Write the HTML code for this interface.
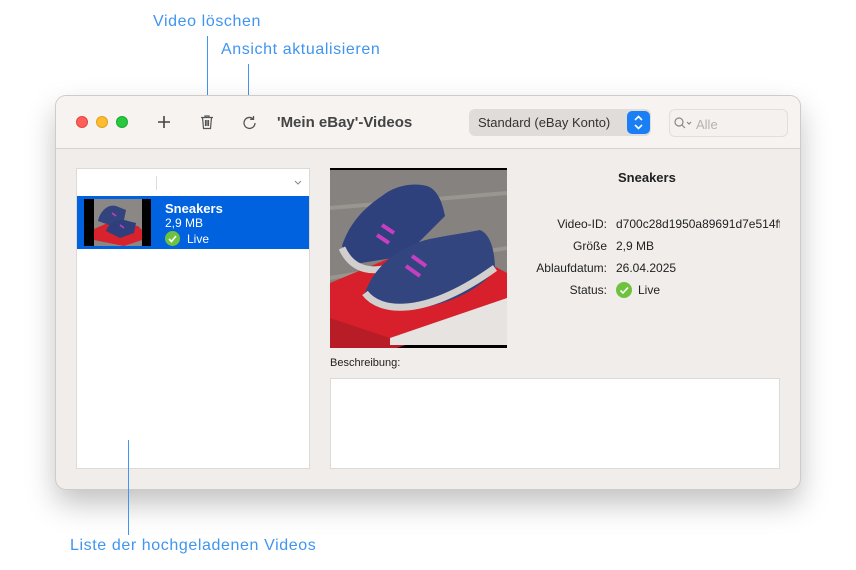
<!DOCTYPE html>
<html><head><meta charset="utf-8"><style>
*{margin:0;padding:0;box-sizing:border-box}
body{width:856px;height:570px;background:#fff;position:relative;overflow:hidden;font-family:"Liberation Sans",sans-serif;color:#222}
.a{position:absolute;color:#3f95f0;font-size:16px;white-space:nowrap;letter-spacing:.6px}
.ln{position:absolute;width:1px;background:#3f95f0}
.win{position:absolute;left:56px;top:96px;width:744px;height:393px;border-radius:10px;background:#f0edeb;box-shadow:0 0 0 1px #cfcbc8,0 14px 30px rgba(0,0,0,.25);overflow:hidden}
.tb{position:absolute;left:0;top:0;width:100%;height:53px;background:#f6f3f1;border-bottom:1px solid #d6d2cf}
.dot{position:absolute;top:20px;width:12px;height:12px;border-radius:50%}
.t{position:absolute;font-size:13px;white-space:nowrap}
.r{text-align:right;width:100px}
</style></head><body>
<div class="a" style="left:153px;top:13px">Video löschen</div>
<div class="ln" style="left:207px;top:36px;height:64px"></div>
<div class="a" style="left:221px;top:41px">Ansicht aktualisieren</div>
<div class="ln" style="left:248px;top:64px;height:36px"></div>

<div class="win">
 <div class="tb">
  <div class="dot" style="left:20px;background:#fe5f57;border:1px solid #e2463f"></div>
  <div class="dot" style="left:40px;background:#febc2e;border:1px solid #dfa123"></div>
  <div class="dot" style="left:60px;background:#28c840;border:1px solid #1aab29"></div>
  <svg style="position:absolute;left:101px;top:19px" width="14" height="14"><path d="M7 1v12M1 7h12" stroke="#444" stroke-width="1.6"/></svg>
  <svg style="position:absolute;left:144px;top:18px" width="14" height="16" fill="none" stroke="#555" stroke-width="1.2"><path d="M1 3.5h12M5 3.5V2h4v1.5M2.5 3.5l1 11h7l1-11M5.5 6v6M7 6v6M8.5 6v6"/></svg>
  <svg style="position:absolute;left:186px;top:19px" width="16" height="16" fill="none" stroke="#555" stroke-width="1.3"><path d="M13 8a5.5 5.5 0 1 1-2-4.3"/><path d="M11.5 1v3.3H8.2"/></svg>
  <div class="t" style="left:221px;top:18px;font-size:15px;font-weight:bold;color:#444">'Mein eBay'-Videos</div>
  <div style="position:absolute;left:413px;top:13px;width:182px;height:27px;border-radius:6px;background:#e0dcd9"></div>
  <div class="t" style="left:422px;top:19px;color:#333">Standard (eBay Konto)</div>
  <div style="position:absolute;left:571px;top:15px;width:23px;height:23px;border-radius:5px;background:#1a7ff5"></div>
  <svg style="position:absolute;left:577px;top:18px" width="11" height="17" fill="none" stroke="#fff" stroke-width="1.6"><path d="M2 6l3.5-3.5L9 6M2 11l3.5 3.5L9 11"/></svg>
  <div style="position:absolute;left:613px;top:13px;width:119px;height:28px;border-radius:6px;border:1px solid #e2dedb;background:#f4f1ef"></div>
  <svg style="position:absolute;left:618px;top:21px" width="20" height="13" fill="none" stroke="#888" stroke-width="1.2"><circle cx="5" cy="5" r="4"/><path d="M8 8l3 3M13 5l2 2 2-2"/></svg>
  <div class="t" style="left:640px;top:21px;color:#b5b2b0">Alle</div>
 </div>
 <div style="position:absolute;left:20px;top:72px;width:234px;height:301px;background:#fff;border:1px solid #ddd9d6">
  <div style="position:absolute;left:79px;top:7px;width:1px;height:14px;background:#ddd"></div>
  <svg style="position:absolute;left:217px;top:11px" width="8" height="6" fill="none" stroke="#888"><path d="M1 1l3 3 3-3"/></svg>
  <div style="position:absolute;left:0;top:27px;width:232px;height:53px;background:#0062df">
   <div style="position:absolute;left:7px;top:3px;width:67px;height:47px;background:#000"></div>
   <svg style="position:absolute;left:17px;top:3px" width="48" height="47"><rect width="48" height="47" fill="#8a8784"/><path d="M0 30l16-7 28 4 4 4v10l-18 6-30-6z" fill="#d8232e"/><path d="M4 22c2-10 10-17 18-15l10 4-2 10-12 6z" fill="#32437e"/><path d="M12 32c3-9 13-13 22-10l8 2-2 10-14 5z" fill="#2e3f7c"/><path d="M18 14l4 3M26 26l4 3" stroke="#c83ec0" stroke-width="1.5"/></svg>
   <div class="t" style="left:88px;top:5px;color:#fff;font-weight:bold;font-size:13px">Sneakers</div>
   <div class="t" style="left:88px;top:20px;color:#fff;font-size:12px">2,9 MB</div>
   <div style="position:absolute;left:88px;top:35px;width:15px;height:15px;border-radius:50%;background:#6ec23e"></div>
   <svg style="position:absolute;left:88px;top:35px" width="15" height="15" fill="none" stroke="#fff" stroke-width="1.6"><path d="M4 8l2.5 2.5L11 5"/></svg>
   <div class="t" style="left:110px;top:36px;color:#fff;font-size:12px">Live</div>
  </div>
 </div>
 <svg style="position:absolute;left:274px;top:72px" width="177" height="180">
  <rect width="177" height="180" fill="#000"/>
  <rect y="2" width="177" height="175" fill="#858280"/>
  <path d="M0 40l177-15M0 110l177-30M60 177l117-50" stroke="#99958f" stroke-width="4"/>
  <path d="M0 115l60-25 80-5 37 20v35l-100 35H0z" fill="#d8202c"/>
  <path d="M0 150l60 20 117-40v10l-110 40H0z" fill="#b81c26"/>
  <path d="M60 170l117-40v47H60z" fill="#e6e3e1"/>
  <path d="M12 78c8-25 25-40 40-50 12-10 30-14 45-10 12 4 16 20 18 30l-40 40-50 8z" fill="#2f417d"/>
  <path d="M12 80c10 22 30 28 60 15" stroke="#d2d0ce" stroke-width="7" fill="none"/>
  <path d="M35 125c10-30 40-50 70-55 15-3 30-5 45-8 12 5 15 25 15 40-20 25-60 40-100 40z" fill="#33457f"/>
  <path d="M35 125c15 20 60 25 130-25" stroke="#d2d0ce" stroke-width="7" fill="none"/>
  <path d="M52 57l12 8M47 67l12 8M82 88l14 10M76 98l14 10" stroke="#c83ec0" stroke-width="4"/>
 </svg>
 <div class="t" style="left:562px;top:74px;font-weight:bold">Sneakers</div>
 <div class="t r" style="left:451px;top:121px;font-size:12px">Video-ID:</div>
 <div class="t r" style="left:451px;top:143px;font-size:12px">Größe</div>
 <div class="t r" style="left:451px;top:165px;font-size:12px">Ablaufdatum:</div>
 <div class="t r" style="left:451px;top:187px;font-size:12px">Status:</div>
 <div class="t" style="left:560px;top:121px;font-size:12px;width:164px;overflow:hidden">d700c28d1950a89691d7e514ff</div>
 <div class="t" style="left:560px;top:143px;font-size:12px">2,9 MB</div>
 <div class="t" style="left:560px;top:165px;font-size:12px">26.04.2025</div>
 <div style="position:absolute;left:560px;top:186px;width:16px;height:16px;border-radius:50%;background:#6ec23e"></div>
 <svg style="position:absolute;left:560px;top:186px" width="16" height="16" fill="none" stroke="#fff" stroke-width="1.6"><path d="M4.5 8.5l2.5 2.5L12 5.5"/></svg>
 <div class="t" style="left:582px;top:187px;font-size:12px">Live</div>
 <div class="t" style="left:274px;top:261px;font-size:11px">Beschreibung:</div>
 <div style="position:absolute;left:274px;top:282px;width:450px;height:91px;background:#fff;border:1px solid #ddd9d6"></div>
</div>
<div class="ln" style="left:128px;top:440px;height:95px"></div>
<div class="a" style="left:70px;top:537px">Liste der hochgeladenen Videos</div>
</body></html>
